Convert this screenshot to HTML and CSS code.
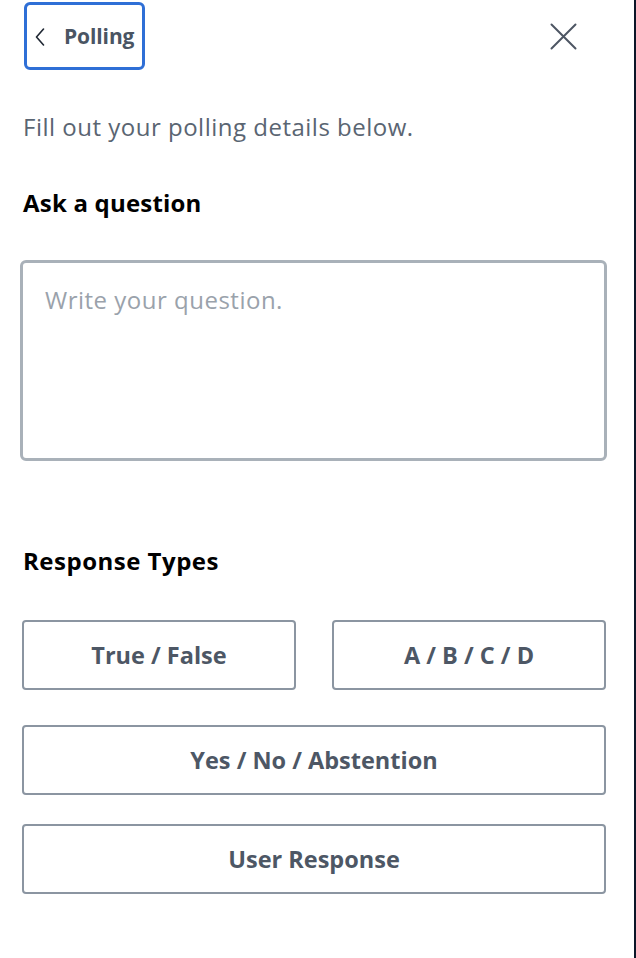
FILE: index.html
```html
<!DOCTYPE html>
<html lang="en">
<head>
<meta charset="utf-8">
<title>Polling</title>
<link rel="stylesheet" href="styles.css">
</head>
<body>
<div class="panel">
  <header class="top">
    <button class="back" type="button">
      <svg class="chev" width="10" height="18" viewBox="0 0 10 18"><path d="M8.5 1 L1.5 9 L8.5 17" fill="none" stroke="#1f2733" stroke-width="1.6" stroke-linecap="round" stroke-linejoin="round"/></svg>
      <span>Polling</span>
    </button>
    <button class="close" type="button" aria-label="Close">
      <svg width="27" height="27" viewBox="0 0 27 27"><path d="M1.5 1.5 L25.5 25.5 M25.5 1.5 L1.5 25.5" fill="none" stroke="#4d5663" stroke-width="2" stroke-linecap="round"/></svg>
    </button>
  </header>
  <p class="intro">Fill out your polling details below.</p>
  <h2 class="label">Ask a question</h2>
  <textarea class="question" placeholder="Write your question."></textarea>
  <h2 class="label types">Response Types</h2>
  <div class="options">
    <div class="pair">
      <button class="opt" type="button">True / False</button>
      <button class="opt" type="button">A / B / C / D</button>
    </div>
    <button class="opt wide first" type="button">Yes / No / Abstention</button>
    <button class="opt wide second" type="button">User Response</button>
  </div>
</div>
</body>
</html>
```

FILE: styles.css
```css
* { box-sizing: border-box; }
html, body { margin: 0; padding: 0; background: #ffffff; }
body { font-family: "Open Sans", "Noto Sans", sans-serif; }

.panel {
  width: 636px;
  height: 958px;
  border-right: 2px solid #0c1628;
  overflow: hidden;
}

.top {
  display: flex;
  align-items: flex-start;
  justify-content: space-between;
  height: 70px;
  padding: 2px 0 0 24px;
}

.back {
  display: flex;
  align-items: center;
  height: 68px;
  width: 121px;
  padding: 0 0 0 8px;
  border: 3px solid #2f6fd6;
  border-radius: 6px;
  background: #fff;
  font-family: inherit;
  cursor: pointer;
}
.back .chev { margin-top: 1px; }
.back span {
  margin-left: 19px;
  font-size: 21px;
  font-weight: 700;
  letter-spacing: -0.1px;
  color: #4a5563;
}

.close {
  margin: 21px 57px 0 0;
  padding: 0;
  border: 0;
  background: none;
  width: 27px;
  height: 27px;
  display: flex;
  cursor: pointer;
}

.intro {
  margin: 43px 0 0 23px;
  font-size: 24px;
  line-height: 28px;
  letter-spacing: 0.5px;
  color: #5a6572;
}

.label {
  margin: 48px 0 0 23px;
  font-size: 24px;
  line-height: 28px;
  font-weight: 700;
  letter-spacing: 0.2px;
  color: #000;
}

.question {
  display: block;
  margin: 43px 0 0 20px;
  width: 587px;
  height: 201px;
  border: 3px solid #a9b1b9;
  border-radius: 6px;
  padding: 23px 22px;
  font-family: inherit;
  font-size: 24px;
  line-height: 28px;
  letter-spacing: 0.5px;
  resize: none;
  color: #333;
}
.question::placeholder { color: #9aa2ab; }

.types { margin-top: 86px; letter-spacing: 0.5px; }

.options {
  margin: 45px 0 0 22px;
  width: 584px;
  display: flex;
  flex-direction: column;
}
.pair {
  display: grid;
  grid-template-columns: 274px 274px;
  column-gap: 36px;
}
.opt {
  height: 70px;
  border: 2px solid #8b95a1;
  border-radius: 4px;
  background: #fff;
  font-family: inherit;
  font-size: 23.5px;
  font-weight: 700;
  color: #4d5765;
  cursor: pointer;
}
.wide { width: 584px; }
.first { margin-top: 35px; }
.second { margin-top: 29px; }
```
